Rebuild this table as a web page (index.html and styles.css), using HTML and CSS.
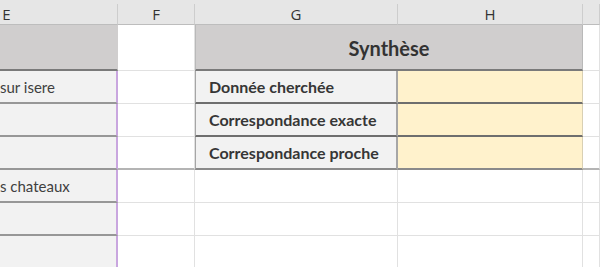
FILE: index.html
```html
<!DOCTYPE html>
<html lang="fr">

<head>
    <meta charset="UTF-8">
    <meta name="viewport" content="width=device-width, initial-scale=1.0">
    <title>Synthèse</title>
    <link rel="stylesheet" href="styles.css">
</head>

<body>
    <div class="sheet">
        <!-- column headers -->
        <div class="sheet-top"></div>
        <div class="col-head">E</div>
        <div class="col-head">F</div>
        <div class="col-head">G</div>
        <div class="col-head">H</div>
        <div class="col-head"></div>

        <!-- row 1 -->
        <div class="cell city title-band"></div>
        <div class="cell"></div>
        <div class="cell synth-title">Synthèse</div>
        <div class="cell"></div>

        <!-- rows 2-4 : recap table -->
        <div class="cell city">sur isere</div>
        <div class="cell"></div>
        <div class="cell label">Donnée cherchée</div>
        <div class="cell value"></div>
        <div class="cell"></div>

        <div class="cell city"></div>
        <div class="cell"></div>
        <div class="cell label">Correspondance exacte</div>
        <div class="cell value"></div>
        <div class="cell"></div>

        <div class="cell city last"></div>
        <div class="cell last"></div>
        <div class="cell label last">Correspondance proche</div>
        <div class="cell value last"></div>
        <div class="cell last"></div>

        <!-- rows 5-7 -->
        <div class="cell city">s chateaux</div>
        <div class="cell"></div>
        <div class="cell"></div>
        <div class="cell"></div>
        <div class="cell"></div>

        <div class="cell city"></div>
        <div class="cell"></div>
        <div class="cell"></div>
        <div class="cell"></div>
        <div class="cell"></div>

        <div class="cell city"></div>
        <div class="cell"></div>
        <div class="cell"></div>
        <div class="cell"></div>
        <div class="cell"></div>
    </div>
</body>

</html>
```

FILE: styles.css
```css
* {
    padding: 0;
    margin: 0;
    box-sizing: border-box;
}

body {
    font-family: Lato, "Liberation Sans", sans-serif;
    background-color: #fff;
    overflow: hidden;
}

/* sheet is scrolled, column E starts left of the view */
.sheet {
    display: grid;
    grid-template-columns: 222px 77px 203px 185px 17px;
    grid-template-rows: 4px 21px 46px repeat(6, 33px);
    margin-left: -104px;
    width: 704px;
}

.sheet-top {
    grid-column: 1 / -1;
    background-color: #e6e6e6;
}

.col-head {
    background-color: #e6e6e6;
    border-right: 1px solid #cdcdcd;
    border-bottom: 1px solid #bdbdbd;
    color: #333;
    font-family: "Open Sans", sans-serif;
    font-size: 15px;
    line-height: 20px;
    text-align: center;
}

.cell {
    border-right: 1px solid #e1e1e1;
    border-bottom: 1px solid #e1e1e1;
    font-size: 15px;
    color: #404040;
    display: flex;
    align-items: center;
    white-space: nowrap;
    overflow: hidden;
}

/* column E : city names, grey fill */
.cell.city {
    background-color: #f2f2f2;
    border-right: 2px solid #c9a6df;
    border-bottom: 2px solid #979797;
    padding-left: 104px;
}

.cell.city.title-band {
    background-color: #d0cece;
    border-right: 1px solid #d0cece;
    border-bottom: 2px solid #7a7a7a;
}

.synth-title {
    grid-column: span 2;
    justify-content: center;
    background-color: #d0cece;
    border-left: 1px solid #b9b9b9;
    border-right: 1px solid #b9b9b9;
    border-bottom: 2px solid #7a7a7a;
    font-size: 20px;
    font-weight: bold;
    color: #333;
    padding-top: 1px;
}

.cell.label {
    background-color: #f2f2f2;
    border-left: 1px solid #a6a6a6;
    border-right: 2px solid #a6a6a6;
    border-bottom: 2px solid #6e6e6e;
    padding-left: 13px;
    font-size: 16px;
    font-weight: bold;
    color: #363636;
}

.cell.value {
    background-color: #fff2cc;
    border-right: 1px solid #d9d0b4;
    border-bottom: 2px solid #6e6e6e;
}

.cell.last {
    border-bottom: 2px solid #b4b4b4;
}

.cell.label.last,
.cell.value.last {
    border-bottom-color: #8a8a8a;
}

.cell.city.last {
    border-bottom-color: #979797;
}
```
